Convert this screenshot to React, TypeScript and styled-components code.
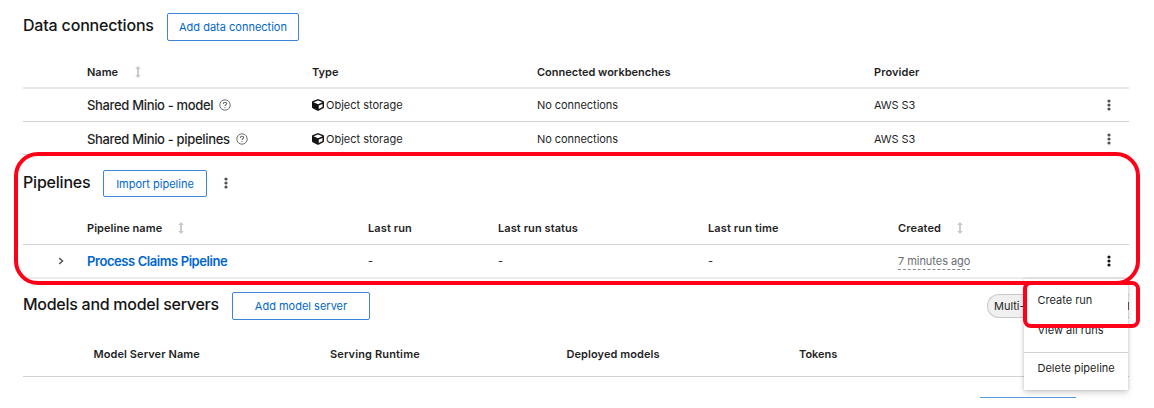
import React from "react";
import styled, { createGlobalStyle } from "styled-components";

const GlobalStyle = createGlobalStyle`
  * { box-sizing: border-box; }
  body { margin: 0; background: #fff; overflow: hidden; }
`;

const Page = styled.main`
  position: relative;
  width: 1154px;
  height: 408px;
  padding: 13px 25px 0 23px;
  overflow: hidden;
  background: #fff;
  color: #1f1f1f;
  font: 11px/16px Inter, "Liberation Sans", sans-serif;
`;

const Section = styled.section<{ $height: number }>`
  height: ${(p) => p.$height}px;
`;

const SectionHead = styled.header`
  display: flex;
  align-items: flex-start;
  height: 28px;
`;

const Title = styled.h2<{ $width: number; $spacing?: number }>`
  width: ${(p) => p.$width}px;
  margin: 0;
  color: #151515;
  font-size: 16px;
  line-height: 24px;
  font-weight: 500;
  white-space: nowrap;
  letter-spacing: ${(p) => p.$spacing ?? 0}px;
`;

const OutlineButton = styled.button<{ $width: number; $height?: number; $spacing?: number }>`
  width: ${(p) => p.$width}px;
  height: ${(p) => p.$height ?? 28}px;
  padding: 0;
  border: 1px solid #3b86d8;
  border-radius: 2px;
  background: #fff;
  color: #0066cc;
  font: 11px/16px Inter, "Liberation Sans", sans-serif;
  letter-spacing: ${(p) => p.$spacing ?? 0}px;
  white-space: nowrap;
`;

const Row = styled.div<{ $columns: string; $height: number; $line?: string; $top?: number }>`
  display: grid;
  grid-template-columns: ${(p) => p.$columns};
  align-items: center;
  height: ${(p) => p.$height}px;
  padding-top: ${(p) => p.$top ?? 0}px;
  border-bottom: ${(p) => p.$line ?? "1px solid #d2d2d2"};
`;

const HeadRow = styled(Row)<{ $gap: number }>`
  margin-top: ${(p) => p.$gap}px;
  font-weight: 600;
`;

const Cell = styled.div<{ $spacing?: number }>`
  display: flex;
  align-items: center;
  white-space: nowrap;
  letter-spacing: ${(p) => p.$spacing ?? 0}px;
`;

const ResourceName = styled.span`
  font-size: 13px;
  font-weight: 500;
  letter-spacing: -0.33px;
`;

const PipelineLink = styled.a`
  color: #0066cc;
  font-size: 13px;
  font-weight: 600;
  letter-spacing: -0.42px;
`;

const Timestamp = styled.span`
  height: 17px;
  color: #6a6e73;
  letter-spacing: -0.05px;
  border-bottom: 1px dashed #8a8d90;
`;

const Kebab = styled.svg`
  display: block;
  width: 4px;
  height: 12px;
`;

const Icon = styled.svg<{ $left?: number; $right?: number }>`
  display: block;
  flex: none;
  margin-left: ${(p) => p.$left ?? 0}px;
  margin-right: ${(p) => p.$right ?? 0}px;
`;

const HeadKebab = styled.div`
  padding: 7px 0 0 17px;
`;

const ServingBadge = styled.div`
  flex: none;
  width: 142px;
  height: 24px;
  margin: 2px 0 0 auto;
  padding: 3px 0 0 6px;
  overflow: hidden;
  border: 1px solid #c8c8c8;
  border-right: 0;
  border-radius: 12px 0 0 12px;
  background: #f0f0f0;
  white-space: nowrap;
`;

const CutButton = styled.div`
  width: 96px;
  height: 1px;
  margin: 20px 0 0 957px;
  background: #5b9be0;
`;

const Menu = styled.div`
  position: absolute;
  left: 1024px;
  top: 279px;
  width: 104px;
  height: 111px;
  padding-top: 6px;
  background: #fff;
  box-shadow: 0 3px 6px rgba(3, 3, 3, 0.16), 0 0 3px rgba(3, 3, 3, 0.14);
`;

const MenuItem = styled.div`
  height: 30px;
  padding: 7px 0 0 13.5px;
  white-space: nowrap;
`;

const Divider = styled.div`
  height: 1px;
  margin: 7px 0 0;
  background: #d2d2d2;
`;

const Highlight = styled.div<{ $x: number; $y: number; $w: number; $h: number; $radius: number }>`
  position: absolute;
  left: ${(p) => p.$x}px;
  top: ${(p) => p.$y}px;
  width: ${(p) => p.$w}px;
  height: ${(p) => p.$h}px;
  border: 4px solid #ff0019;
  border-radius: ${(p) => p.$radius}px;
`;

const KebabIcon = ({ color = "#4f5255" }: { color?: string }) => (
  <Kebab viewBox="0 0 4 12" fill={color}>
    <circle cx="2" cy="2" r="1.6" />
    <circle cx="2" cy="6" r="1.6" />
    <circle cx="2" cy="10" r="1.6" />
  </Kebab>
);

const SortIcon = ({ left }: { left: number }) => (
  <Icon $left={left} width="6" height="12" viewBox="0 0 6 12" fill="#c7c7c7">
    <path d="M3 0 5.8 3H3.9V9H5.8L3 12 .2 9H2.1V3H.2Z" />
  </Icon>
);

const HelpIcon = () => (
  <Icon $left={6} width="12" height="12" viewBox="0 0 12 12" fill="none" stroke="#6a6e73">
    <circle cx="6" cy="6" r="5.2" strokeWidth="1" />
    <path d="M4.4 4.9C4.4 3.7 5.1 3.2 6 3.2S7.7 3.8 7.7 4.6C7.7 5.7 6 5.7 6 7" strokeWidth="1.1" />
    <circle cx="6" cy="8.6" r=".65" fill="#6a6e73" stroke="none" />
  </Icon>
);

const CubeIcon = () => (
  <Icon $right={2} width="12" height="12" viewBox="0 0 512 512" fill="#151515">
    <path d="M239.1 6.3l-208 78c-18.7 7-31.1 25-31.1 45v225.1c0 18.2 10.3 34.8 26.5 42.9l208 104c13.5 6.8 29.4 6.8 42.9 0l208-104c16.3-8.1 26.5-24.8 26.5-42.9V129.3c0-20-12.4-37.9-31.1-44.9l-208-78C262 2.2 250 2.2 239.1 6.3zM256 68.4l192 72v1.1l-192 78-192-78v-1.1l192-72zm32 356V275.5l160-65v133.9l-160 80z" />
  </Icon>
);

const dataColumns = "64px 225px 225px 337px 233px 1fr";
const pipelineColumns = "64px 281px 130px 210px 190px 209px 1fr";
const modelColumns = "70.5px 236.5px 236.5px 232.5px 1fr";

const connections = [
  { name: "Shared Minio - model", top: 0 },
  { name: "Shared Minio - pipelines", top: 1 },
];

export default function App() {
  return (
    <>
      <GlobalStyle />
      <Page>
        <Section $height={157}>
          <SectionHead>
            <Title $width={144} $spacing={-0.18}>Data connections</Title>
            <OutlineButton $width={132}>Add data connection</OutlineButton>
          </SectionHead>
          <HeadRow $gap={15} $columns={dataColumns} $height={33} $top={1} $line="2px solid #e8e8e8">
            <Cell />
            <Cell>Name<SortIcon left={17} /></Cell>
            <Cell>Type</Cell>
            <Cell>Connected workbenches</Cell>
            <Cell $spacing={0.1}>Provider</Cell>
          </HeadRow>
          {connections.map((c) => (
            <Row key={c.name} $columns={dataColumns} $height={33} $top={c.top}>
              <Cell />
              <Cell><ResourceName>{c.name}</ResourceName><HelpIcon /></Cell>
              <Cell><CubeIcon />Object storage</Cell>
              <Cell $spacing={-0.05}>No connections</Cell>
              <Cell $spacing={-0.1}>AWS S3</Cell>
              <Cell><KebabIcon /></Cell>
            </Row>
          ))}
        </Section>
        <Section $height={122}>
          <SectionHead>
            <Title $width={80} $spacing={-0.2}>Pipelines</Title>
            <OutlineButton $width={104} $height={27}>Import pipeline</OutlineButton>
            <HeadKebab><KebabIcon /></HeadKebab>
          </SectionHead>
          <HeadRow $gap={14} $columns={pipelineColumns} $height={33}>
            <Cell />
            <Cell $spacing={0.05}>Pipeline name<SortIcon left={16} /></Cell>
            <Cell $spacing={0.1}>Last run</Cell>
            <Cell $spacing={0.08}>Last run status</Cell>
            <Cell $spacing={0.12}>Last run time</Cell>
            <Cell $spacing={0.1}>Created<SortIcon left={16} /></Cell>
          </HeadRow>
          <Row $columns={pipelineColumns} $height={34} $line="2px solid #ececec">
            <Cell>
              <Icon $left={35} width="6" height="8" viewBox="0 0 6 8" fill="none" stroke="#55585b" strokeWidth="1.6">
                <path d="M1.2 1 4.5 4 1.2 7" />
              </Icon>
            </Cell>
            <Cell><PipelineLink>Process Claims Pipeline</PipelineLink></Cell>
            <Cell>-</Cell>
            <Cell>-</Cell>
            <Cell>-</Cell>
            <Cell><Timestamp>7 minutes ago</Timestamp></Cell>
            <Cell><KebabIcon color="#151515" /></Cell>
          </Row>
        </Section>
        <Section $height={116}>
          <SectionHead>
            <Title $width={209} $spacing={-0.27}>Models and model servers</Title>
            <OutlineButton $width={138}>Add model server</OutlineButton>
            <ServingBadge>Multi-model serving enabled</ServingBadge>
          </SectionHead>
          <HeadRow $gap={12} $columns={modelColumns} $height={45}>
            <Cell />
            <Cell $spacing={0.08}>Model Server Name</Cell>
            <Cell $spacing={0.14}>Serving Runtime</Cell>
            <Cell $spacing={0.08}>Deployed models</Cell>
            <Cell>Tokens</Cell>
          </HeadRow>
          <CutButton />
        </Section>
        <Menu>
          <MenuItem>Create run</MenuItem>
          <MenuItem>View all runs</MenuItem>
          <Divider />
          <MenuItem>Delete pipeline</MenuItem>
        </Menu>
        <Highlight $x={14} $y={152} $w={1126} $h={133} $radius={24} />
        <Highlight $x={1023} $y={281} $w={117} $h={47} $radius={8} />
      </Page>
    </>
  );
}
